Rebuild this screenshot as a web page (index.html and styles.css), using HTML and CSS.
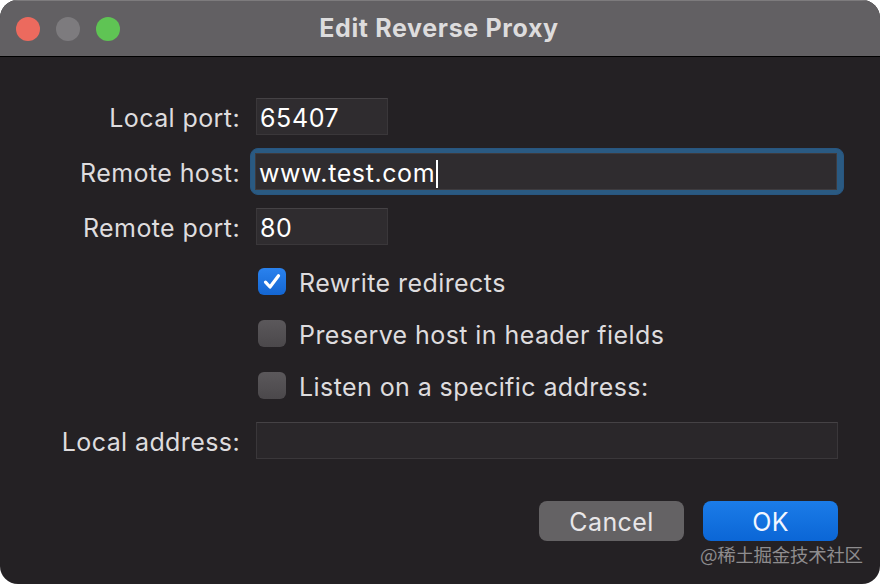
FILE: index.html
```html
<!DOCTYPE html>
<html>
<head>
<meta charset="utf-8">
<link rel="stylesheet" href="styles.css">
</head>
<body>
<div class="window">
  <div class="titlebar">
    <div class="lights">
      <span class="light red"></span>
      <span class="light gray"></span>
      <span class="light green"></span>
    </div>
    <div class="title">Edit Reverse Proxy</div>
  </div>
  <div class="content">
    <div class="form">
      <label class="label">Local port:</label>
      <div class="field short">65407</div>

      <label class="label">Remote host:</label>
      <div class="ring"><div class="field wide">www.test.com<span class="caret"></span></div></div>

      <label class="label">Remote port:</label>
      <div class="field short">80</div>

      <div class="checks">
        <div class="check"><span class="box on"><svg viewBox="0 0 28 27" width="28" height="27"><path d="M7.5 14.2 L12 19 L20.5 7.8" fill="none" stroke="#fff" stroke-width="3.2" stroke-linecap="round" stroke-linejoin="round"/></svg></span><span class="ctext">Rewrite redirects</span></div>
        <div class="check"><span class="box"></span><span class="ctext">Preserve host in header fields</span></div>
        <div class="check"><span class="box"></span><span class="ctext">Listen on a specific address:</span></div>
      </div>

      <label class="label">Local address:</label>
      <div class="field wide empty"></div>
    </div>
    <div class="buttons">
      <button class="btn cancel">Cancel</button>
      <button class="btn ok">OK</button>
    </div>
  </div>
  <div class="watermark">@稀土掘金技术社区</div>
</div>
</body>
</html>
```
FILE: styles.css
```css
html, body {
  margin: 0;
  padding: 0;
  background: #ffffff;
}
body {
  width: 880px;
  height: 584px;
  overflow: hidden;
  font-family: Inter, "Noto Sans", "Liberation Sans", sans-serif;
}
.window {
  position: relative;
  width: 880px;
  height: 584px;
  border-radius: 18px;
  overflow: hidden;
  background: #242124;
  display: flex;
  flex-direction: column;
}
.titlebar {
  background: #626063;
  border-top: 1px solid #7d7b7d;
  box-sizing: border-box;
  border-bottom: 1px solid #000;
  height: 57px;
  display: flex;
  align-items: center;
  position: relative;
}
.lights {
  display: flex;
  gap: 16px;
  padding-left: 16px;
}
.light {
  width: 24px;
  height: 24px;
  border-radius: 50%;
  display: block;
}
.red { background: #ec6a5e; }
.gray { background: #7d7b7e; }
.green { background: #5fc454; }
.title {
  position: absolute;
  left: 0;
  right: 0;
  top: 0;
  bottom: 0;
  display: flex;
  align-items: center;
  justify-content: center;
  color: #dddcdd;
  font-weight: 700;
  font-size: 25px;
  letter-spacing: 0.65px;
  padding-bottom: 2px;
  padding-right: 2px;
  pointer-events: none;
}
.content {
  flex: 1;
  display: flex;
  flex-direction: column;
  padding-top: 41px;
}
.form {
  display: grid;
  grid-template-columns: 240px 582px;
  column-gap: 16px;
  align-items: center;
}
.label {
  text-align: right;
  color: #dedcde;
  font-size: 25px;
  letter-spacing: 0.4px;
  padding-top: 3px;
}
.field {
  box-sizing: border-box;
  height: 37px;
  background: #2f2c2f;
  border: 1px solid #3a373a;
  border-top-color: #454245;
  color: #ffffff;
  font-size: 25px;
  line-height: 38px;
  padding-left: 3px;
  letter-spacing: 0.6px;
}
.short { width: 132px; }
.wide { width: 582px; }
.empty { background: #2a272a; }
.ring {
  margin: 13px 0 13px -6px;
  width: 594px;
  box-sizing: border-box;
  padding: 5px;
  border-radius: 8px;
  background: #2a5a82;
  border: 1px solid #285680;
}
.ring .field {
  border-color: #3e3b3e;
  margin: -1px;
}
.caret {
  display: inline-block;
  width: 2px;
  height: 28px;
  background: #fff;
  vertical-align: -6px;
  margin-left: 1px;
}
.checks {
  grid-column: 2;
  display: flex;
  flex-direction: column;
  gap: 25px;
  padding-top: 23px;
  padding-bottom: 23px;
  margin-left: 2px;
}
.check {
  display: flex;
  align-items: center;
  height: 27px;
  gap: 13px;
}
.box {
  width: 28px;
  height: 27px;
  border-radius: 6px;
  background: linear-gradient(#5b585b, #4b484b);
  display: block;
  flex: none;
}
.box.on {
  background: linear-gradient(#2a82ee, #1466d2);
}
.box svg { display: block; }
.ctext {
  color: #dedcde;
  font-size: 25px;
  letter-spacing: 0.42px;
  padding-top: 3px;
}
.buttons {
  display: flex;
  justify-content: flex-end;
  gap: 19px;
  padding-right: 42px;
  margin-top: 42px;
}
.btn {
  height: 40px;
  border: none;
  border-radius: 8px;
  font-family: inherit;
  font-size: 25px;
  letter-spacing: 0.4px;
  color: #e8e6e8;
  padding: 2px 0 0;
}
.cancel {
  width: 145px;
  background: #646264;
}
.ok {
  width: 135px;
  background: linear-gradient(#1b7ce8, #0b66d6);
  color: #f2f6ff;
}
.watermark {
  position: absolute;
  left: 700px;
  top: 541px;
  color: #8e8c8e;
  font-size: 18.5px;
  font-family: "Noto Sans CJK SC", "Noto Sans", sans-serif;
  letter-spacing: -0.3px;
}
```
